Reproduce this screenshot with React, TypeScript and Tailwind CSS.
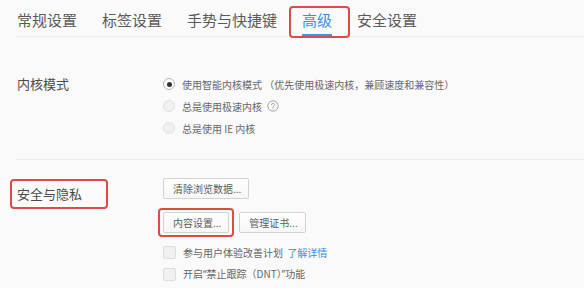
import React from 'react';

const FONT = { fontFamily: '"Noto Sans CJK SC", "Noto Sans", sans-serif' };
const LATIN = { fontFamily: '"Noto Sans", sans-serif' };

const TABS = ['常规设置', '标签设置', '手势与快捷键', '高级', '安全设置'];

function Radio({ checked }: { checked?: boolean }) {
  return checked ? (
    <span className="flex h-[12px] w-[12px] shrink-0 items-center justify-center rounded-full border border-[#b5b5b5] bg-white">
      <span className="h-[5px] w-[5px] rounded-full bg-[#333]" />
    </span>
  ) : (
    <span className="h-[12px] w-[12px] shrink-0 rounded-full border border-[#e0e0e0] bg-[#f1f1f1]" />
  );
}

function HelpIcon() {
  return (
    <svg width="12" height="12" viewBox="0 0 12 12" className="ml-[5px] shrink-0">
      <circle cx="6" cy="6" r="5.2" fill="none" stroke="#9a9a9a" strokeWidth="0.9" />
      <path d="M4.5 4.7a1.5 1.5 0 1 1 2.1 1.4c-.4.2-.6.5-.6.9v.4" fill="none" stroke="#9a9a9a" strokeWidth="0.9" strokeLinecap="round" />
      <circle cx="6" cy="8.8" r="0.55" fill="#9a9a9a" />
    </svg>
  );
}

function Button({ children }: { children: React.ReactNode }) {
  return (
    <span className="flex h-[21px] items-center rounded-[2px] border border-[#d2d2d2] bg-gradient-to-b from-white to-[#f6f6f6] pl-[9px] pr-[7px] text-[10px] text-[#5c5c5c]">
      {children}
    </span>
  );
}

function Checkbox() {
  return <span className="h-[13px] w-[13px] shrink-0 rounded-[2px] border border-[#dcdcdc] bg-[#f0f0f0]" />;
}

export default function App() {
  return (
    <div className="h-[288px] w-[584px] overflow-hidden bg-[#fafafa]" style={FONT}>
      {/* Tab bar */}
      <div className="ml-[15px] flex h-[37px] items-end gap-[25px] border-b border-[#ececec] pl-[2px]">
        {TABS.map(tab =>
          tab === '高级' ? (
            <div key={tab} className="relative flex h-[26px] items-start border-b-2 border-[#4a90e2] text-[15px] leading-[20px] text-[#3d8de4]">
              {tab}
              <span className="absolute -left-[13px] -right-[18px] -top-[4px] bottom-[-4px] rounded-[4px] border-[2.5px] border-[#dc4a4a]" />
            </div>
          ) : (
            <div key={tab} className="flex h-[26px] items-start text-[15px] leading-[20px] text-[#5a5a5a]">
              {tab}
            </div>
          )
        )}
      </div>

      {/* 内核模式 */}
      <div className="ml-[15px] flex border-b border-[#ececec] pb-[20px] pt-[36px]">
        <div className="flex h-[22px] w-[148px] items-center pl-[2px] text-[13px] text-[#4a4a4a]">内核模式</div>
        <div className="flex flex-col text-[10px] text-[#666]">
          <div className="flex h-[22px] items-center gap-[7px]">
            <Radio checked />
            <span>使用智能内核模式 （优先使用极速内核，兼顾速度和兼容性）</span>
          </div>
          <div className="flex h-[22px] items-center gap-[7px]">
            <Radio />
            <span className="flex items-center">
              总是使用极速内核
              <HelpIcon />
            </span>
          </div>
          <div className="flex h-[22px] items-center gap-[7px]">
            <Radio />
            <span>总是使用 IE 内核</span>
          </div>
        </div>
      </div>

      {/* 安全与隐私 */}
      <div className="ml-[15px] flex pt-[18px]">
        <div className="w-[148px] pt-[6px]">
          <div className="relative ml-[2px] text-[13px] leading-[20px] text-[#4a4a4a]">
            安全与隐私
            <span className="absolute -left-[7px] -top-[5px] h-[30px] w-[98px] rounded-[4px] border-[2.5px] border-[#dc4a4a]" />
          </div>
        </div>
        <div className="flex flex-col">
          <div className="flex">
            <Button>清除浏览数据...</Button>
          </div>
          <div className="mt-[13px] flex gap-[10px]">
            <div className="relative">
              <Button>内容设置...</Button>
              <span className="absolute -bottom-[4px] -left-[5px] -right-[5px] -top-[4px] rounded-[4px] border-[2.5px] border-[#dc4a4a]" />
            </div>
            <Button>管理证书...</Button>
          </div>
          <div className="mt-[8px] flex flex-col text-[10px] text-[#666]">
            <div className="flex h-[22px] items-center gap-[7px]">
              <Checkbox />
              <span>
                参与用户体验改善计划 <span className="ml-[2px] text-[#3a8ee6]">了解详情</span>
              </span>
            </div>
            <div className="flex h-[22px] items-center gap-[7px]">
              <Checkbox />
              <span>
                开启<span style={LATIN}>“</span>禁止跟踪（DNT）<span style={LATIN}>”</span>功能
              </span>
            </div>
          </div>
        </div>
      </div>
    </div>
  );
}
